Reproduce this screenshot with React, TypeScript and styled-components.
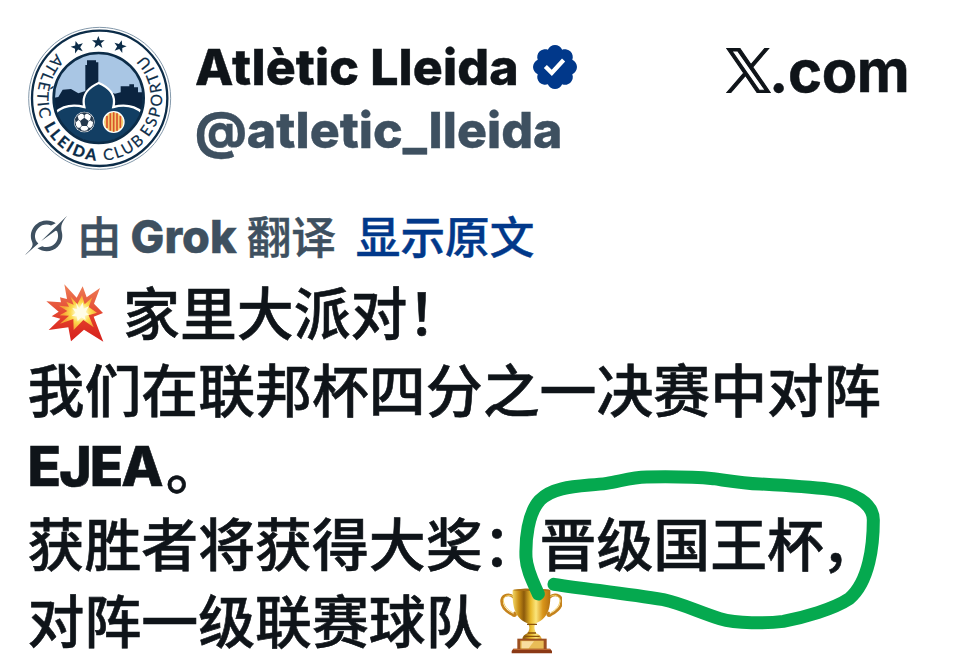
import React from "react";
import styled, { createGlobalStyle } from "styled-components";

const GlobalStyle = createGlobalStyle`
  * {
    box-sizing: border-box;
  }

  body {
    margin: 0;
    background: #fff;
  }
`;

const latin = `Inter, "Noto Sans CJK SC", sans-serif`;
const cjk = `"Noto Sans CJK SC", sans-serif`;

const Page = styled.main`
  position: relative;
  width: 960px;
  height: 662px;
  overflow: hidden;
  background: #fff;
  color: #0f1419;
  font-family: ${cjk};
`;

// header
const Header = styled.header`
  display: flex;
  align-items: flex-start;
  height: 197px;
  padding: 15px 0 0 15px;
`;

const Crest = styled.svg`
  flex: none;
  width: 170px;
  height: 165px;
`;

const Account = styled.div`
  display: flex;
  flex-direction: column;
  width: 541px;
  padding: 20px 0 0 10px;
`;

const NameRow = styled.div`
  display: flex;
  align-items: center;
  gap: 14px;
  height: 63px;
`;

const Name = styled.span`
  font-family: ${latin};
  font-size: 50px;
  font-weight: 800;
  line-height: 64px;
  letter-spacing: 0.1px;
  white-space: nowrap;
  -webkit-text-stroke: 0.4px currentColor;
`;

const Handle = styled(Name)`
  color: #3e5060;
  letter-spacing: 0;
`;

const Badge = styled.svg`
  flex: none;
  width: 44px;
  height: 44px;
`;

const Site = styled.div`
  display: flex;
  align-items: flex-start;
  padding-top: 33px;
`;

const XMark = styled.svg`
  flex: none;
  width: 45px;
  height: 45px;
`;

const SiteName = styled.span`
  margin: -10px 0 0 -2px;
  font-family: ${latin};
  font-size: 58px;
  font-weight: 700;
  line-height: 66px;
  letter-spacing: -0.4px;
  -webkit-text-stroke: 0.5px currentColor;
`;

// translation bar
const Translation = styled.div`
  display: flex;
  align-items: center;
  height: 75px;
  padding-left: 25px;
  color: #3e5060;
  font-size: 44.6px;
  font-weight: 500;
  line-height: 75px;
  white-space: nowrap;
  -webkit-text-stroke: 0.5px currentColor;
`;

const GrokIcon = styled.svg`
  flex: none;
  width: 42px;
  height: 41px;
  margin: 2px 10px 0 0;
`;

const Brand = styled.b`
  margin: 3px 10px 0 9px;
  font-family: ${latin};
  font-size: 45px;
  font-weight: 800;
  letter-spacing: 0;
`;

const Original = styled.a`
  margin-left: 20px;
  color: #01388a;
`;

// post text
const Post = styled.div`
  padding-left: 27.5px;
`;

const Line = styled.p`
  display: flex;
  align-items: center;
  height: 77px;
  margin: 0;
  font-size: 56.9px;
  font-weight: 500;
  line-height: 77px;
  white-space: nowrap;
  -webkit-text-stroke: 0.6px currentColor;
`;

const Club = styled.b`
  margin: 4px 4px 0 0;
  font-family: ${latin};
  font-size: 55px;
  font-weight: 800;
  letter-spacing: -1.9px;
`;

const Comma = styled.span`
  margin-left: -3px;
`;

const Boom = styled.svg`
  flex: none;
  width: 60px;
  height: 60px;
  margin: 4px 18px 0 17.5px;
`;

const Trophy = styled.svg`
  flex: none;
  width: 64px;
  height: 68px;
  margin: 4px 0 0 15px;
`;

// marker stroke drawn over the text
const Marker = styled.svg`
  position: absolute;
  left: 460px;
  top: 450px;
  width: 450px;
  height: 212px;
  pointer-events: none;
`;

const STAR = "M0-19 5-6 19-6 8 3 12 17 0 8-12 17-8 3-19-6-5-6Z";

interface RingTextProps {
  text: string;
  offset: number;
  length: number;
  weight?: number;
}

const RingText: React.FC<RingTextProps> = ({ text, offset, length, weight = 400 }) => (
  <text
    fontFamily="Lato, sans-serif"
    fontSize="47"
    fontWeight={weight}
    fill="#0c2c48"
    stroke="#0c2c48"
    strokeWidth="0.6"
  >
    <textPath href="#ring" startOffset={offset} textLength={length}>
      {text}
    </textPath>
  </text>
);

const ClubCrest = () => (
  <Crest viewBox="0 0 510 495">
    <defs>
      <path id="ring" d="M254 63A187 187 0 0 0 254 437A187 187 0 0 0 254 63" />
      <clipPath id="disc">
        <circle cx="251" cy="249" r="133" />
      </clipPath>
    </defs>
    <circle cx="254" cy="250" r="213" fill="#fff" stroke="#8499ab" strokeWidth="3" />
    <circle cx="254" cy="250" r="203" fill="#fff" stroke="#0c2c48" strokeWidth="7" />
    <path d={STAR} transform="translate(187 96) rotate(-16)" fill="#0c2c48" />
    <path d={STAR} transform="translate(250 82)" fill="#0c2c48" />
    <path d={STAR} transform="translate(315 94) rotate(16)" fill="#0c2c48" />
    <RingText text="ATLÈTIC" offset={144} length={212} />
    <RingText text="LLEIDA" offset={379} length={196} weight={900} />
    <RingText text="CLUB" offset={600} length={137} />
    <RingText text="ESPORTIU" offset={754} length={270} />
    <g clipPath="url(#disc)">
      <rect x="110" y="110" width="290" height="290" fill="#a9c6e4" />
      <path
        d="M110 250 130 246 143 224 168 222 190 235 211 228V150H216V136H243V142H250V230L282 230 300 236 317 232V214H343V208H357V217H369V232H400V400H110Z"
        fill="#0b2440"
      />
      <path
        d="M110 310C125 280 160 264 208 276C198 235 225 216 251 204C278 216 305 235 295 276C342 264 378 280 395 310V400H110Z"
        fill="#123e63"
        stroke="#fff"
        strokeWidth="7"
      />
    </g>
    <circle cx="251" cy="249" r="135" fill="none" stroke="#0c2c48" strokeWidth="8" />
    <circle cx="208" cy="321" r="31" fill="#fff" />
    <circle cx="208" cy="321" r="28" fill="none" stroke="#24384c" strokeWidth="3" />
    <path
      d="M208 308 221 318 216 333H200L195 318ZM199 294H217L208 301ZM182 310 188 303 191 314 183 322ZM234 310 228 303 225 314 233 322ZM187 338 195 338 201 347 194 346ZM229 338 221 338 215 347 222 346Z"
      fill="#24384c"
    />
    <path d="M208 308V300M221 318 228 314M216 333 221 339M200 333 195 339M195 318 190 314" stroke="#24384c" strokeWidth="2" />
    <circle cx="296" cy="321" r="31" fill="#f5cf70" stroke="#fff" strokeWidth="4" />
    <path d="M276 303V339M286 295V347M296 292V350M306 295V347M316 303V339" stroke="#d9532b" strokeWidth="5" />
  </Crest>
);

const VerifiedBadge = () => (
  <Badge viewBox="1.6 1.6 18.8 18.8">
    <path
      fill="#01388a"
      d="M20.396 11c-.018-.646-.215-1.275-.57-1.816-.354-.54-.852-.972-1.438-1.246.223-.607.27-1.264.14-1.897-.131-.634-.437-1.218-.882-1.687-.47-.445-1.053-.75-1.687-.882-.633-.13-1.29-.083-1.897.14-.273-.587-.704-1.086-1.245-1.44S11.647 1.62 11 1.604c-.646.017-1.273.213-1.813.568s-.969.854-1.24 1.44c-.608-.223-1.267-.272-1.902-.14-.635.13-1.22.436-1.69.882-.445.47-.749 1.055-.878 1.688-.13.633-.08 1.29.144 1.896-.587.274-1.087.705-1.443 1.245-.356.54-.555 1.17-.574 1.817.02.647.218 1.276.574 1.817.356.54.856.972 1.443 1.245-.224.606-.274 1.263-.144 1.896.13.634.433 1.218.877 1.688.47.443 1.054.747 1.687.878.633.132 1.29.084 1.897-.136.274.586.705 1.084 1.246 1.439.54.354 1.17.551 1.816.569.647-.016 1.276-.213 1.817-.567s.972-.854 1.245-1.44c.604.239 1.266.296 1.903.164.636-.132 1.22-.447 1.68-.907.46-.46.776-1.044.908-1.681s.075-1.299-.165-1.903c.586-.274 1.084-.705 1.439-1.246.354-.54.551-1.17.569-1.816zM9.662 14.85l-3.429-3.428 1.293-1.302 2.072 2.072 4.4-4.794 1.347 1.246z"
    />
  </Badge>
);

const XLogo = () => (
  <XMark viewBox="0 0 24 24">
    <path
      fill="#0f1419"
      stroke="#0f1419"
      strokeWidth="0.6"
      d="M14.234 10.162 22.977 0h-2.072l-7.591 8.824L7.251 0H.258l9.168 13.343L.258 24H2.33l8.016-9.318L16.749 24h6.993zm-2.837 3.299-.929-1.329L3.076 1.56h3.182l5.965 8.532.929 1.329 7.754 11.09h-3.182z"
    />
  </XMark>
);

const GrokLogo = () => (
  <GrokIcon viewBox="0 0 24 24" preserveAspectRatio="none">
    <path
      fill="#3e5060"
      d="M9.27 15.29l7.978-5.897c.391-.29.95-.177 1.137.272.98 2.369.542 5.215-1.41 7.169-1.951 1.954-4.667 2.382-7.149 1.406l-2.711 1.257c3.889 2.661 8.611 2.003 11.562-.953 2.341-2.344 3.066-5.539 2.388-8.42l.006.007c-.983-4.232.242-5.924 2.75-9.383.06-.082.12-.164.179-.248l-3.301 3.305v-.01L9.267 15.292M7.623 16.723c-2.792-2.67-2.31-6.801.071-9.184 1.761-1.763 4.647-2.483 7.166-1.425l2.705-1.25a7.808 7.808 0 00-1.829-1A8.975 8.975 0 005.984 5.83c-2.533 2.536-3.33 6.436-1.962 9.764 1.022 2.487-.653 4.246-2.34 6.022-.599.63-1.199 1.259-1.682 1.925l7.62-6.815"
    />
  </GrokIcon>
);

const BoomEmoji = () => (
  <Boom viewBox="90 247 180 180">
    <defs>
      <linearGradient id="boomRed" x1="0" y1="0" x2="0" y2="1">
        <stop offset="0" stopColor="#ee8058" />
        <stop offset="0.6" stopColor="#e23c2a" />
        <stop offset="1" stopColor="#d61f1c" />
      </linearGradient>
      <radialGradient id="boomCore" gradientUnits="userSpaceOnUse" cx="197" cy="336" r="52">
        <stop offset="0" stopColor="#fff" />
        <stop offset="0.25" stopColor="#fffbd0" />
        <stop offset="0.6" stopColor="#fcd94c" />
        <stop offset="1" stopColor="#f6a436" />
      </radialGradient>
    </defs>
    <path
      d="M148 251 185 291 203 257 215 290 255 262 237 309 264 337 236 348 265 423 207 387 168 422 160 380 101 388 136 354 110 347 131 333 94 302 138 305 135 290 156 295Z"
      fill="url(#boomRed)"
    />
    <path
      d="M166 287 187 311 201 284 209 311 232 290 221 319 246 336 221 344 236 380 205 358 176 388 175 355 135 369 162 345 134 344 157 331 132 315 162 318 154 303 176 312Z"
      fill="url(#boomCore)"
    />
    <path d="M183 306 193 323 203 305 206 324 222 316 212 334 222 342 209 345 212 358 199 350 188 362 185 347 170 346 182 336 172 322 187 326Z" fill="#fffde8" />
  </Boom>
);

const TrophyEmoji = () => (
  <Trophy viewBox="110 410 192 204">
    <defs>
      <linearGradient id="gold" x1="0" x2="1">
        <stop offset="0" stopColor="#f3d765" />
        <stop offset="0.16" stopColor="#c98f16" />
        <stop offset="0.3" stopColor="#8c5a0b" />
        <stop offset="0.48" stopColor="#e9b92b" />
        <stop offset="0.62" stopColor="#fbe57b" />
        <stop offset="0.8" stopColor="#d9951a" />
        <stop offset="1" stopColor="#b3700f" />
      </linearGradient>
    </defs>
    <path
      d="M157 441C145 428 124 434 121 449C119 469 135 484 153 493C161 500 166 493 160 488M265 441C278 428 299 434 301 449C303 469 286 484 269 493C261 500 256 493 262 488"
      fill="none"
      stroke="#c5831c"
      strokeWidth="8"
      strokeLinecap="round"
    />
    <path
      d="M157 440C145 430 128 436 126 449C126 465 139 479 154 487M265 440C278 430 293 436 296 449C296 465 284 479 268 487"
      fill="none"
      stroke="#f2cd5e"
      strokeWidth="3"
    />
    <path
      d="M154 420C175 413 247 413 267 420C268 461 267 501 224 519C216 527 220 539 224 548C232 552 241 558 241 567H183C183 558 190 552 199 548C205 539 207 527 198 519C156 501 153 461 154 420Z"
      fill="url(#gold)"
    />
    <ellipse cx="211" cy="419" rx="55" ry="3" fill="#a96f16" />
    <path d="M197 522H227M199 548H224M190 558H235" stroke="#8a520b" strokeWidth="4" />
    <path d="M168 565H256V597H168Z" fill="#9c4f20" />
    <path d="M151 602 156 595H266L272 602V609H151Z" fill="#8b3916" />
    <path d="M156 597H267" stroke="#c97438" strokeWidth="3" />
    <path d="M177 571H247V595H177Z" fill="#e9bd57" />
    <path d="M181 573H218L202 594H181Z" fill="#f8dda0" />
  </Trophy>
);

const App: React.FC = () => {
  return (
    <>
      <GlobalStyle />
      <Page>
        <Header>
          <ClubCrest />
          <Account>
            <NameRow>
              <Name>Atlètic Lleida</Name>
              <VerifiedBadge />
            </NameRow>
            <Handle>@atletic_lleida</Handle>
          </Account>
          <Site>
            <XLogo />
            <SiteName>.com</SiteName>
          </Site>
        </Header>

        <Translation>
          <GrokLogo />
          <span>由</span>
          <Brand>Grok</Brand>
          <span>翻译</span>
          <Original>显示原文</Original>
        </Translation>

        <Post lang="zh-CN">
          <Line>
            <BoomEmoji />
            家里大派对！
          </Line>
          <Line>我们在联邦杯四分之一决赛中对阵</Line>
          <Line>
            <Club>EJEA</Club>。
          </Line>
          <Line>
            获胜者将获得大奖：晋级国王杯<Comma>，</Comma>
          </Line>
          <Line>
            对阵一级联赛球队
            <TrophyEmoji />
          </Line>
        </Post>

        <Marker viewBox="0 0 1350 636">
          <path
            d="M235 432C218 394 200 360 198 322C196 270 203 190 240 150C285 105 365 110 440 100C480 94 515 82 560 81C620 80 690 79 760 86C810 93 850 100 900 102C970 106 1040 110 1110 118C1180 126 1240 160 1240 210C1240 285 1228 395 1168 446C1120 478 1030 503 970 514C920 521 830 521 780 506C720 488 670 462 610 449C500 431 390 419 282 403"
            fill="none"
            stroke="#05a94f"
            strokeWidth="39"
            strokeLinecap="round"
            strokeLinejoin="round"
          />
        </Marker>
      </Page>
    </>
  );
};

export default App;
